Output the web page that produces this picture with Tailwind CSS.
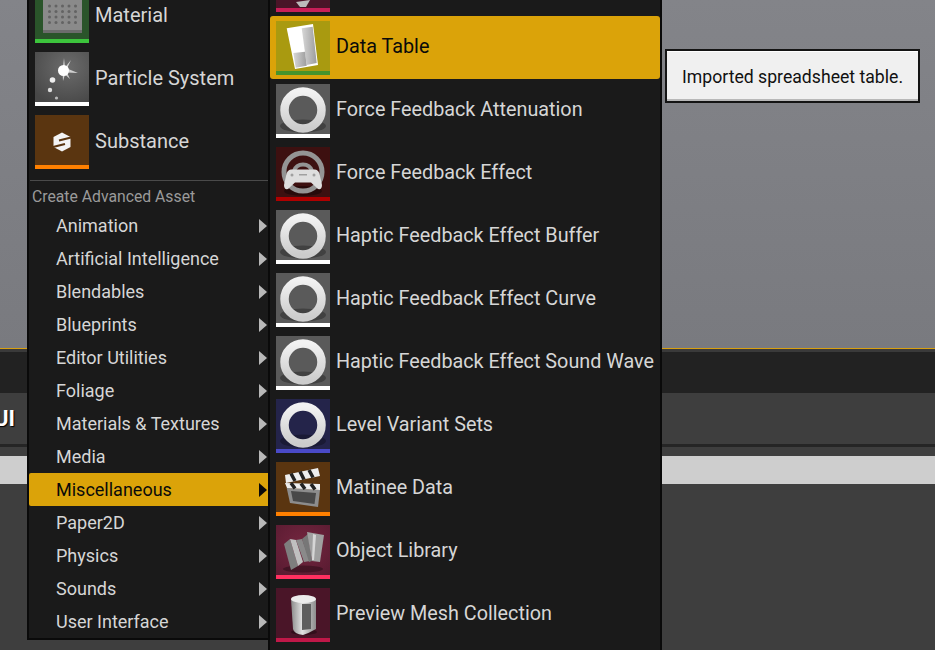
<!DOCTYPE html>
<html lang="en">
<head>
    <meta charset="UTF-8">
    <meta name="viewport" content="width=device-width, initial-scale=1.0">
    <title>Create Advanced Asset</title>
    <script src="https://cdn.jsdelivr.net/npm/@tailwindcss/browser@4"></script>
</head>
<body class="relative w-[935px] h-[650px] overflow-hidden bg-[#3e3e3e] font-['Roboto',sans-serif] text-[#d6d6d6]">
    <!-- shared icon parts -->
    <svg class="absolute w-0 h-0">
        <defs>
            <linearGradient id="ringFill" x1="0" y1="0" x2="0" y2="1">
                <stop offset="0" stop-color="#f2f2f2"/><stop offset="1" stop-color="#cccccc"/>
            </linearGradient>
            <linearGradient id="sheetBar" x1="0" y1="0" x2="1" y2="0">
                <stop offset="0" stop-color="#d8d8d8"/><stop offset="1" stop-color="#9c9c9c"/>
            </linearGradient>
            <linearGradient id="tube" x1="0" y1="0" x2="1" y2="0">
                <stop offset="0" stop-color="#8a8a8a"/><stop offset=".45" stop-color="#e2e2e2"/><stop offset="1" stop-color="#8c8c8c"/>
            </linearGradient>
            <radialGradient id="pBg" cx=".6" cy=".3" r=".8">
                <stop offset="0" stop-color="#6c6c6c"/><stop offset="1" stop-color="#474747"/>
            </radialGradient>
            <radialGradient id="libBg" cx=".5" cy=".4" r=".8">
                <stop offset="0" stop-color="#74263f"/><stop offset="1" stop-color="#571a30"/>
            </radialGradient>
            <symbol id="ring" viewBox="0 0 54 50">
                <ellipse cx="27" cy="42" rx="23" ry="6.500" fill="#000" opacity=".28"/>
                <circle cx="27" cy="26" r="18.500" fill="none" stroke="url(#ringFill)" stroke-width="8.500"/>
            </symbol>
            <symbol id="arrow" viewBox="0 0 8 14"><path d="M0 0L8 7L0 14Z" fill="currentColor"/></symbol>
        </defs>
    </svg>

    <!-- editor behind the menus -->
    <div class="h-[348px] bg-gradient-to-b from-[#838489] to-[#797a7f]"></div>
    <div class="h-[1px] bg-[#d9a010]"></div>
    <div class="h-[3px] bg-[#3a3a3a]"></div>
    <div class="h-[41px] bg-[#222222]"></div>
    <div class="h-[51px] bg-[#3e3e3e] flex items-center">
        <span class="ml-[-6px] text-[22px] font-bold text-white [text-shadow:1px_1px_1px_#000]">UI</span>
    </div>
    <div class="h-[3px] bg-[#252525]"></div>
    <div class="h-[9px]"></div>
    <div class="h-[28px] bg-[#cecece]"></div>

    <!-- left menu -->
    <div class="absolute left-[27px] top-[-16px] w-[243px] h-[656px] bg-[#1a1a1a] border-2 border-r-0 border-t-0 border-[#0a0a0a]">
        <div class="h-[63px] flex items-center gap-[6px] pl-[6px]">
            <svg class="w-[54px] h-[54px] shrink-0 mt-[1px]" viewBox="0 0 54 54">
                <rect width="54" height="50" fill="#2a542a"/><rect y="50" width="54" height="4" fill="#3cc43c"/>
                <path d="M8 0H42L47 7V44H8Z" fill="#8a8a8a"/>
                <path d="M8 41H47V44H8Z" fill="#6c6c6c"/>
                <g fill="#636363">
                    <circle cx="14.500" cy="17" r="1.500"/><circle cx="21" cy="17" r="1.500"/><circle cx="27.500" cy="17" r="1.500"/><circle cx="34" cy="17" r="1.500"/><circle cx="40.500" cy="17" r="1.500"/>
                    <circle cx="14.500" cy="22.500" r="1.500"/><circle cx="21" cy="22.500" r="1.500"/><circle cx="27.500" cy="22.500" r="1.500"/><circle cx="34" cy="22.500" r="1.500"/><circle cx="40.500" cy="22.500" r="1.500"/>
                    <circle cx="14.500" cy="28" r="1.500"/><circle cx="21" cy="28" r="1.500"/><circle cx="27.500" cy="28" r="1.500"/><circle cx="34" cy="28" r="1.500"/><circle cx="40.500" cy="28" r="1.500"/>
                    <circle cx="14.500" cy="33.500" r="1.500"/><circle cx="21" cy="33.500" r="1.500"/><circle cx="27.500" cy="33.500" r="1.500"/><circle cx="34" cy="33.500" r="1.500"/><circle cx="40.500" cy="33.500" r="1.500"/>
                </g>
            </svg>
            <span class="text-[20px] pb-[2px]">Material</span>
        </div>
        <div class="h-[63px] flex items-center gap-[6px] pl-[6px]">
            <svg class="w-[54px] h-[54px] shrink-0 mt-[1px]" viewBox="0 0 54 54">
                <rect width="54" height="50" fill="url(#pBg)"/><rect y="50" width="54" height="4" fill="#fff"/>
                <path d="M27.500 19L29 6L30 15.500L36 8L32 16.500L43 21L32 20.500L35 27L30 22.500L28 29Z" fill="#fff" opacity=".7"/>
                <circle cx="28.500" cy="18.500" r="5.500" fill="#fff"/>
                <circle cx="17.500" cy="28" r="2.800" fill="#eee"/><circle cx="15" cy="38" r="2.200" fill="#ddd"/><circle cx="21.500" cy="46" r="1.600" fill="#bbb"/>
            </svg>
            <span class="text-[20px] pb-[2px]">Particle System</span>
        </div>
        <div class="h-[63px] flex items-center gap-[6px] pl-[6px]">
            <svg class="w-[54px] h-[54px] shrink-0 mt-[1px]" viewBox="0 0 54 54">
                <rect width="54" height="50" fill="#5a3510"/><rect y="50" width="54" height="4" fill="#ff8000"/>
                <path d="M27 17.500L35.500 22V32L27 36.500L18.500 32V22Z" fill="#f4f4f4"/>
                <path d="M36 22.500L24 25.500M30 29L18 32" stroke="#5a3510" stroke-width="2.200"/>
            </svg>
            <span class="text-[20px] pb-[2px]">Substance</span>
        </div>
        <div class="mt-[7px] ml-[1px] mr-[2px] h-[1px] bg-[#4a4a4a]"></div>
        <div class="h-[28px] pl-[3px] pt-[3px] flex items-center text-[15.75px] text-[#9a9a9a]">Create Advanced Asset</div>

        <div class="h-[33px] flex items-center justify-between pl-[27px] pr-[3px] text-[18px]">Animation<svg class="w-[8px] h-[14px] text-[#b8b8b8]"><use href="#arrow"/></svg></div>
        <div class="h-[33px] flex items-center justify-between pl-[27px] pr-[3px] text-[18px]">Artificial Intelligence<svg class="w-[8px] h-[14px] text-[#b8b8b8]"><use href="#arrow"/></svg></div>
        <div class="h-[33px] flex items-center justify-between pl-[27px] pr-[3px] text-[18px]">Blendables<svg class="w-[8px] h-[14px] text-[#b8b8b8]"><use href="#arrow"/></svg></div>
        <div class="h-[33px] flex items-center justify-between pl-[27px] pr-[3px] text-[18px]">Blueprints<svg class="w-[8px] h-[14px] text-[#b8b8b8]"><use href="#arrow"/></svg></div>
        <div class="h-[33px] flex items-center justify-between pl-[27px] pr-[3px] text-[18px]">Editor Utilities<svg class="w-[8px] h-[14px] text-[#b8b8b8]"><use href="#arrow"/></svg></div>
        <div class="h-[33px] flex items-center justify-between pl-[27px] pr-[3px] text-[18px]">Foliage<svg class="w-[8px] h-[14px] text-[#b8b8b8]"><use href="#arrow"/></svg></div>
        <div class="h-[33px] flex items-center justify-between pl-[27px] pr-[3px] text-[18px]">Materials &amp; Textures<svg class="w-[8px] h-[14px] text-[#b8b8b8]"><use href="#arrow"/></svg></div>
        <div class="h-[33px] flex items-center justify-between pl-[27px] pr-[3px] text-[18px]">Media<svg class="w-[8px] h-[14px] text-[#b8b8b8]"><use href="#arrow"/></svg></div>
        <div class="h-[33px] flex items-center justify-between pl-[27px] pr-[3px] text-[18px] bg-[#dba309] text-[#0a0a0a] rounded-l-[2px]">Miscellaneous<svg class="w-[8px] h-[14px] text-[#0a0a0a]"><use href="#arrow"/></svg></div>
        <div class="h-[33px] flex items-center justify-between pl-[27px] pr-[3px] text-[18px]">Paper2D<svg class="w-[8px] h-[14px] text-[#b8b8b8]"><use href="#arrow"/></svg></div>
        <div class="h-[33px] flex items-center justify-between pl-[27px] pr-[3px] text-[18px]">Physics<svg class="w-[8px] h-[14px] text-[#b8b8b8]"><use href="#arrow"/></svg></div>
        <div class="h-[33px] flex items-center justify-between pl-[27px] pr-[3px] text-[18px]">Sounds<svg class="w-[8px] h-[14px] text-[#b8b8b8]"><use href="#arrow"/></svg></div>
        <div class="h-[33px] flex items-center justify-between pl-[27px] pr-[3px] text-[18px]">User Interface<svg class="w-[8px] h-[14px] text-[#b8b8b8]"><use href="#arrow"/></svg></div>
    </div>

    <!-- right menu -->
    <div class="absolute left-[268px] top-[-47px] w-[394px] h-[720px] bg-[#1a1a1a] border-x-2 border-[#0a0a0a] text-[19.8px]">
        <div class="h-[63px] flex items-center gap-[6px] pl-[6px]">
            <svg class="w-[54px] h-[54px] shrink-0 mt-[1px]" viewBox="0 0 54 54"><rect width="54" height="50" fill="#4a1528"/><rect y="50" width="54" height="4" fill="#c81e58"/><path d="M20 44L34 42L30 49L24 49Z" fill="#bbb"/></svg>
        </div>
        <div class="h-[63px] flex items-center gap-[6px] pl-[6px] pr-[2px] bg-[#dba309] text-[#0a0a0a] rounded-[3px]">
            <svg class="w-[54px] h-[54px] shrink-0 mt-[1px]" viewBox="0 0 54 54">
                <rect width="54" height="50" fill="#a99a10"/><rect y="50" width="54" height="4" fill="#46942c"/>
                <path d="M10.700 7.300L37 3L42 44L19 48Z" fill="#fff"/>
                <path d="M25.700 7.300L36.700 5.700L40.700 42L30.700 44Z" fill="url(#sheetBar)"/>
                <path d="M17.300 32L29 30.700L30.700 44.700L19.700 46.700Z" fill="url(#sheetBar)"/>
            </svg>
            <span class="pb-[2px]">Data Table</span>
        </div>
        <div class="h-[63px] flex items-center gap-[6px] pl-[6px]">
            <svg class="w-[54px] h-[54px] shrink-0 mt-[1px]" viewBox="0 0 54 54"><rect width="54" height="50" fill="#5a5a5a"/><rect y="50" width="54" height="4" fill="#fff"/><use href="#ring" width="54" height="50"/></svg>
            <span class="pb-[2px]">Force Feedback Attenuation</span>
        </div>
        <div class="h-[63px] flex items-center gap-[6px] pl-[6px]">
            <svg class="w-[54px] h-[54px] shrink-0 mt-[1px]" viewBox="0 0 54 54">
                <rect width="54" height="50" fill="#3d1010"/><rect y="50" width="54" height="4" fill="#b00000"/>
                <ellipse cx="27" cy="44" rx="19" ry="5" fill="#000" opacity=".35"/>
                <circle cx="27" cy="25" r="19" fill="none" stroke="#949494" stroke-width="5"/>
                <path d="M18 24A9.500 9.500 0 0 1 36 24" fill="none" stroke="#949494" stroke-width="4"/>
                <path d="M15 22.500H39Q43 22.500 44 29L46 38Q46 43 42 42L35 35.500H19L12 42Q8 43 8 38L10 29Q11 22.500 15 22.500Z" fill="#dedede"/>
                <g fill="#a0a0a0"><circle cx="16" cy="28" r="1.500"/><circle cx="38" cy="28" r="1.500"/><rect x="23" y="27" width="8" height="1.500"/></g>
            </svg>
            <span class="pb-[2px]">Force Feedback Effect</span>
        </div>
        <div class="h-[63px] flex items-center gap-[6px] pl-[6px]">
            <svg class="w-[54px] h-[54px] shrink-0 mt-[1px]" viewBox="0 0 54 54"><rect width="54" height="50" fill="#5a5a5a"/><rect y="50" width="54" height="4" fill="#fff"/><use href="#ring" width="54" height="50"/></svg>
            <span class="pb-[2px]">Haptic Feedback Effect Buffer</span>
        </div>
        <div class="h-[63px] flex items-center gap-[6px] pl-[6px]">
            <svg class="w-[54px] h-[54px] shrink-0 mt-[1px]" viewBox="0 0 54 54"><rect width="54" height="50" fill="#5a5a5a"/><rect y="50" width="54" height="4" fill="#fff"/><use href="#ring" width="54" height="50"/></svg>
            <span class="pb-[2px]">Haptic Feedback Effect Curve</span>
        </div>
        <div class="h-[63px] flex items-center gap-[6px] pl-[6px]">
            <svg class="w-[54px] h-[54px] shrink-0 mt-[1px]" viewBox="0 0 54 54"><rect width="54" height="50" fill="#5a5a5a"/><rect y="50" width="54" height="4" fill="#fff"/><use href="#ring" width="54" height="50"/></svg>
            <span class="pb-[2px]">Haptic Feedback Effect Sound Wave</span>
        </div>
        <div class="h-[63px] flex items-center gap-[6px] pl-[6px]">
            <svg class="w-[54px] h-[54px] shrink-0 mt-[1px]" viewBox="0 0 54 54"><rect width="54" height="50" fill="#24244a"/><rect y="50" width="54" height="4" fill="#4a4ac8"/><use href="#ring" width="54" height="50"/></svg>
            <span class="pb-[2px]">Level Variant Sets</span>
        </div>
        <div class="h-[63px] flex items-center gap-[6px] pl-[6px]">
            <svg class="w-[54px] h-[54px] shrink-0 mt-[1px]" viewBox="0 0 54 54">
                <rect width="54" height="50" fill="#5a3510"/><rect y="50" width="54" height="4" fill="#ff8000"/>
                <path d="M10.700 26L44 28L42 45L14 41Z" fill="#8c8c8c"/>
                <path d="M15 29L40 31L38.500 42L17 39Z" fill="#484848"/>
                <path d="M9 13L42 6L44 14L10 21Z" fill="#eee"/>
                <path d="M15 11.500L19 19M24 9.500L28 17.500M33 8L37 15.500" stroke="#222" stroke-width="3.500"/>
                <path d="M9 21L44 22V28L11 26Z" fill="#eee"/>
                <path d="M15 21L19 26.500M25 21.500L29 27M35 22L39 27.500" stroke="#222" stroke-width="3.500"/>
            </svg>
            <span class="pb-[2px]">Matinee Data</span>
        </div>
        <div class="h-[63px] flex items-center gap-[6px] pl-[6px]">
            <svg class="w-[54px] h-[54px] shrink-0 mt-[1px]" viewBox="0 0 54 54">
                <rect width="54" height="50" fill="url(#libBg)"/><rect y="50" width="54" height="4" fill="#ff3060"/>
                <ellipse cx="27" cy="44" rx="20" ry="3.500" fill="#000" opacity=".3"/>
                <path d="M8 19L14 14L22 41L15 45Z" fill="#7e7e7e"/>
                <path d="M14 14L20 15L27 37L22 41Z" fill="#c0c0c0"/>
                <path d="M20 15L26 14L34 36L28 37Z" fill="#8a8a8a"/>
                <path d="M26 14L32 9L36 36L33 37Z" fill="#777"/>
                <path d="M31 7L48 10L44 37L36 36Z" fill="#a0a0a0"/>
                <path d="M37 9L40 10L38 35L36 35Z" fill="#d6d6d6"/>
            </svg>
            <span class="pb-[2px]">Object Library</span>
        </div>
        <div class="h-[63px] flex items-center gap-[6px] pl-[6px]">
            <svg class="w-[54px] h-[54px] shrink-0 mt-[1px]" viewBox="0 0 54 54">
                <rect width="54" height="50" fill="#4a1528"/><rect y="50" width="54" height="4" fill="#c01848"/>
                <ellipse cx="28" cy="44" rx="13" ry="3" fill="#000" opacity=".3"/>
                <path d="M15 11H40V41Q33 45 27 47Q18 46 17 41Z" fill="url(#tube)"/>
                <ellipse cx="27.500" cy="11" rx="12.500" ry="4" fill="#ececec"/>
                <path d="M26 16H35V41L26 42Z" fill="#5e5e5e"/>
            </svg>
            <span class="pb-[2px]">Preview Mesh Collection</span>
        </div>
    </div>

    <!-- tooltip -->
    <div class="absolute left-[665px] top-[49px] w-[255px] h-[54px] flex items-center pl-[15px] pt-[2px] border-2 border-[#141414] bg-[#f0f0f0] shadow-[inset_0_-2px_0_#b8b8b8,inset_0_1px_0_#fff] text-[17.65px] text-[#111111]">Imported spreadsheet table.</div>
</body>
</html>
